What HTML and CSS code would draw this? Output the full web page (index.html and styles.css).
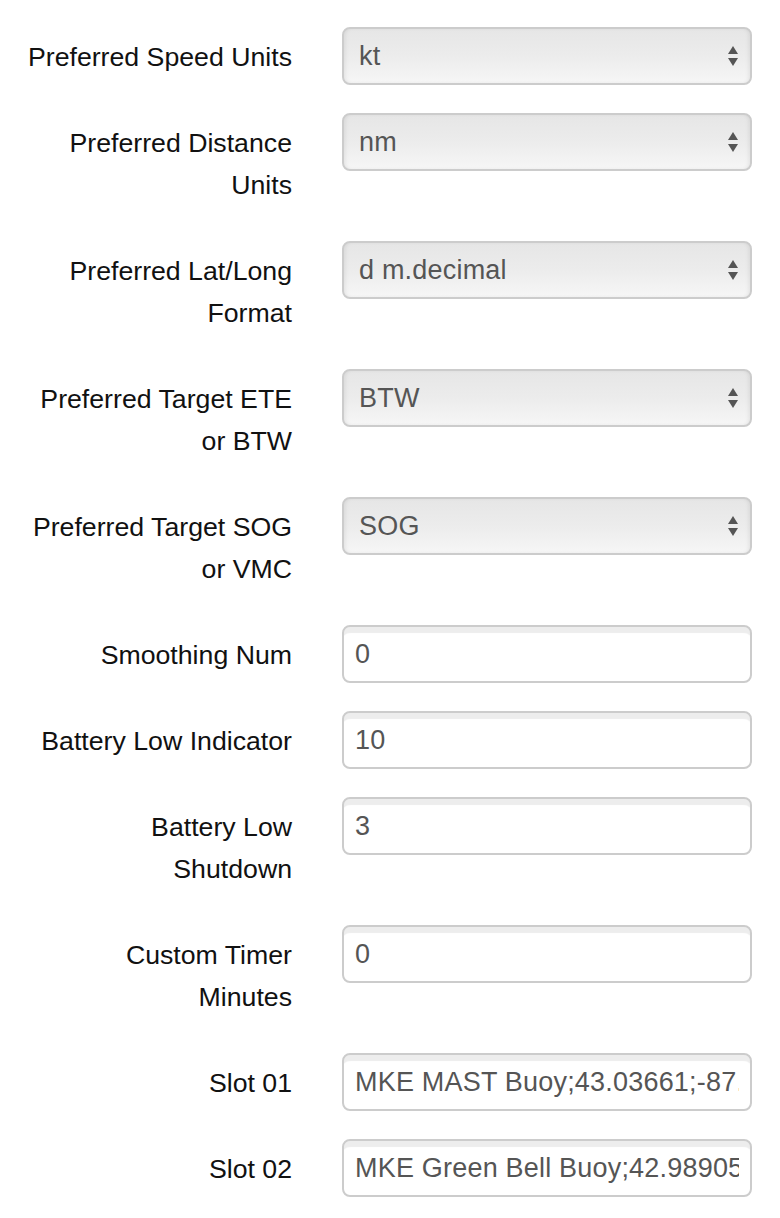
FILE: index.html
```html
<!DOCTYPE html>
<html>
<head>
<meta charset="utf-8">
<link rel="stylesheet" href="styles.css">
</head>
<body>
<form class="form">
  <div class="row">
    <label class="label">Preferred Speed Units</label>
    <div class="control select"><span class="val">kt</span><svg class="arrows" viewBox="0 0 12 24" width="12" height="24"><path d="M6 2 L11 10 L1 10 Z M1 14 L11 14 L6 22 Z" fill="#555"/></svg></div>
  </div>
  <div class="row">
    <label class="label">Preferred Distance<br>Units</label>
    <div class="control select"><span class="val">nm</span><svg class="arrows" viewBox="0 0 12 24" width="12" height="24"><path d="M6 2 L11 10 L1 10 Z M1 14 L11 14 L6 22 Z" fill="#555"/></svg></div>
  </div>
  <div class="row">
    <label class="label">Preferred Lat/Long<br>Format</label>
    <div class="control select"><span class="val">d m.decimal</span><svg class="arrows" viewBox="0 0 12 24" width="12" height="24"><path d="M6 2 L11 10 L1 10 Z M1 14 L11 14 L6 22 Z" fill="#555"/></svg></div>
  </div>
  <div class="row">
    <label class="label">Preferred Target ETE<br>or BTW</label>
    <div class="control select"><span class="val">BTW</span><svg class="arrows" viewBox="0 0 12 24" width="12" height="24"><path d="M6 2 L11 10 L1 10 Z M1 14 L11 14 L6 22 Z" fill="#555"/></svg></div>
  </div>
  <div class="row">
    <label class="label">Preferred Target SOG<br>or VMC</label>
    <div class="control select"><span class="val">SOG</span><svg class="arrows" viewBox="0 0 12 24" width="12" height="24"><path d="M6 2 L11 10 L1 10 Z M1 14 L11 14 L6 22 Z" fill="#555"/></svg></div>
  </div>
  <div class="row">
    <label class="label">Smoothing Num</label>
    <input class="control input" type="text" value="0">
  </div>
  <div class="row">
    <label class="label">Battery Low Indicator</label>
    <input class="control input" type="text" value="10">
  </div>
  <div class="row">
    <label class="label">Battery Low<br>Shutdown</label>
    <input class="control input" type="text" value="3">
  </div>
  <div class="row">
    <label class="label">Custom Timer<br>Minutes</label>
    <input class="control input" type="text" value="0">
  </div>
  <div class="row">
    <label class="label">Slot 01</label>
    <input class="control input" type="text" value="MKE MAST Buoy;43.03661;-87.87891">
  </div>
  <div class="row">
    <label class="label">Slot 02</label>
    <input class="control input" type="text" value="MKE Green Bell Buoy;42.98905;-87.84870">
  </div>
</form>
</body>
</html>
```
FILE: styles.css
```css
html, body {
  margin: 0;
  padding: 0;
  background: #fff;
}
body {
  font-family: "Liberation Sans", Arial, Helvetica, sans-serif;
  font-size: 26.7px;
  color: #111;
}
.form {
  padding-top: 27px;
}
.row {
  display: grid;
  grid-template-columns: 292px 410px;
  column-gap: 50px;
  align-items: start;
  margin-bottom: 28px;
}
.label {
  text-align: right;
  line-height: 42px;
  padding: 9px 0 7px;
  color: #111;
}
.control {
  box-sizing: border-box;
  height: 58px;
  width: 410px;
  border: 2px solid #cccccc;
  border-radius: 8px;
  font-family: "Liberation Sans", Arial, Helvetica, sans-serif;
  font-size: 27px;
  letter-spacing: 0.2px;
  color: #555;
  margin: 0;
}
.select {
  display: flex;
  align-items: center;
  justify-content: space-between;
  padding: 0 11px 0 15px;
  background: linear-gradient(#e6e6e6 0%, #ececec 50%, #f6f6f6 100%);
  box-shadow: inset 3px 0 4px -2px rgba(0,0,0,0.08), inset -3px 0 4px -2px rgba(0,0,0,0.08), 0 1px 0 rgba(255,255,255,0.8);
}
.val {
  line-height: 1;
}
.arrows {
  display: block;
}
.input {
  display: block;
  padding: 0 11px;
  background: #fff;
  box-shadow: inset 0 8px 1px -2px #ededed;
  outline: none;
}
```
